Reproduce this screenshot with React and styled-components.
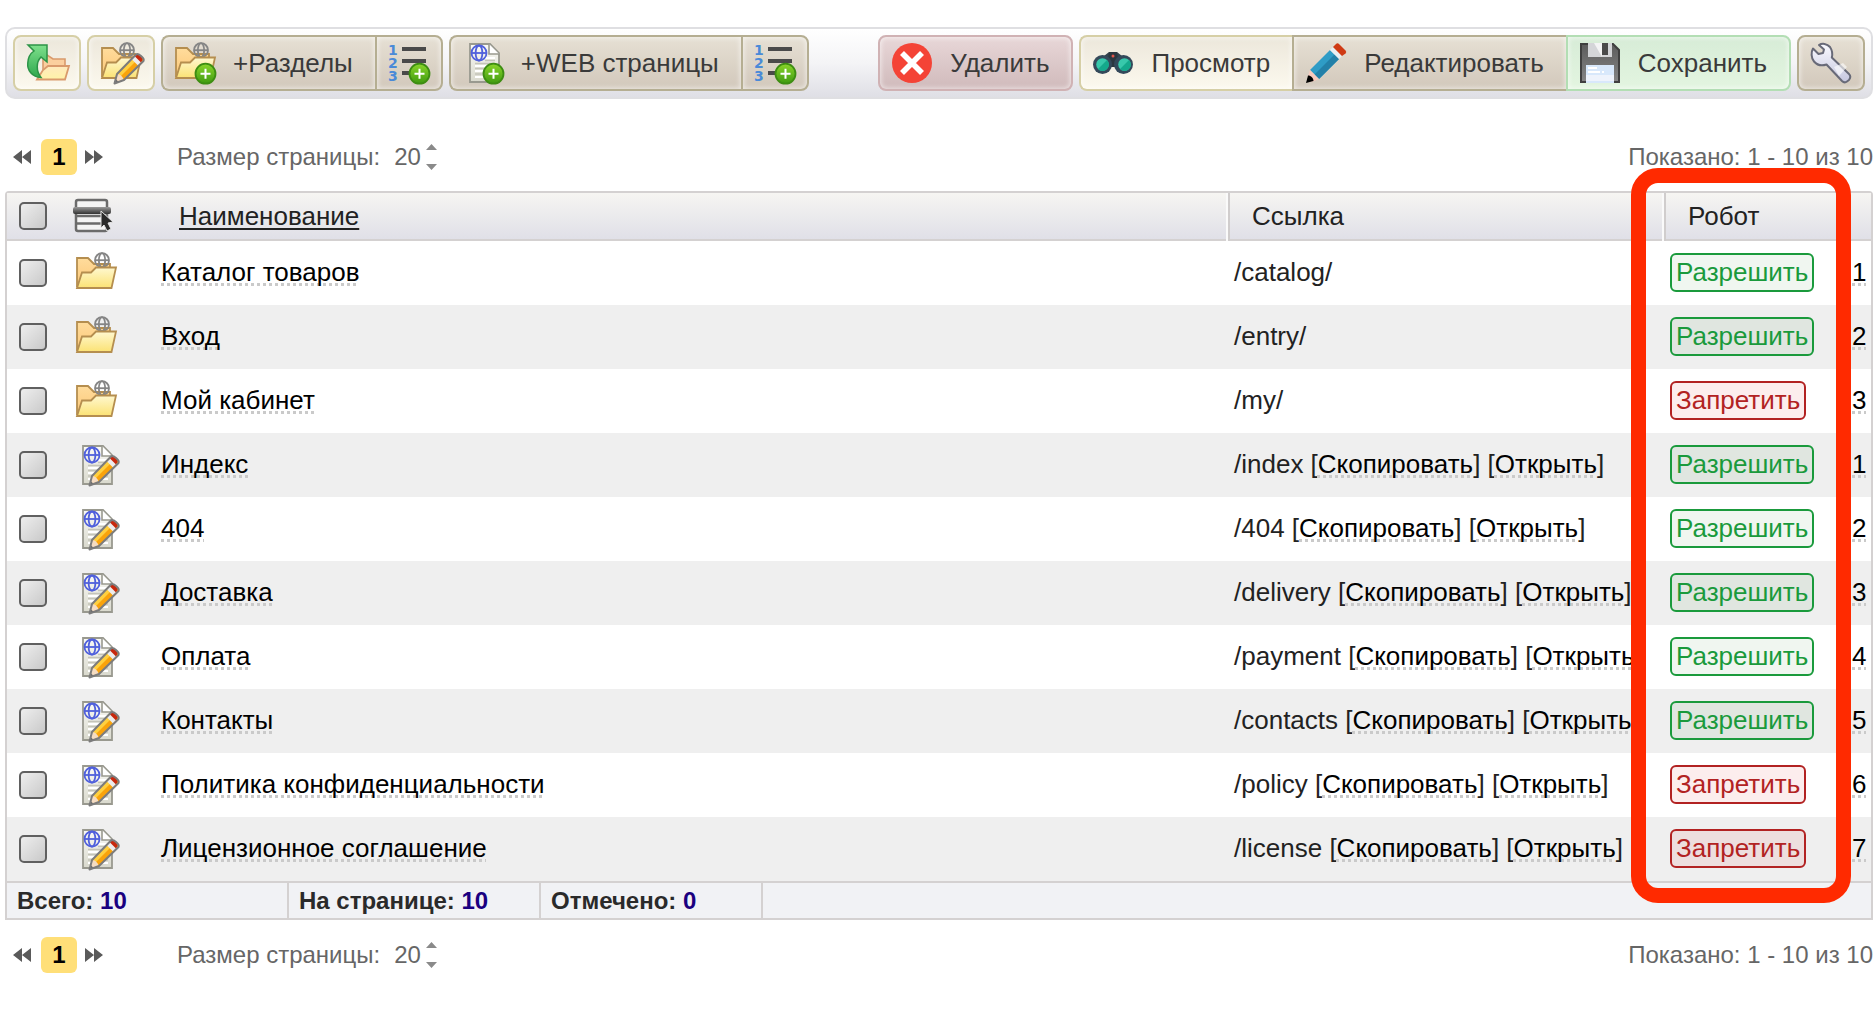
import { useState } from "react";
import styled, { createGlobalStyle, css } from "styled-components";

const GlobalStyle = createGlobalStyle`
    * {
        box-sizing: border-box;
    }

    body {
        margin: 0;
        background: #fff;
        color: #222;
        font: 26px/32px "Liberation Sans", Arial, sans-serif;
    }

    button, input, select {
        margin: 0;
        font: inherit;
        color: inherit;
    }
`;

const tones = {
    light: css`
        border-color: #d6cfa6;
        background: linear-gradient(#ece7db, #fcf9ee);
    `,
    tan: css`
        border-color: #b5ae92;
        background: linear-gradient(#e6e0d4, #d2c8bb);
    `,
    red: css`
        border-color: #d0b2b4;
        background: linear-gradient(#e8d7d8, #d0babb);
    `,
    green: css`
        border-color: #b3deb4;
        background: linear-gradient(#d7ecd7, #e3f5e0);
    `,
};

const Page = styled.main`
    padding: 27px 1px 0 5px;
`;

const Toolbar = styled.div`
    display: flex;
    gap: 6px;
    padding: 6px;
    border: 2px solid #dfdfe2;
    border-radius: 10px;
    background: linear-gradient(#fff, #f4f4f6 50%, #dfdfe5);
`;

const ButtonGroup = styled.div`
    display: flex;
`;

const Spacer = styled.div`
    flex: 1;
`;

const ToolButton = styled.button`
    display: flex;
    align-items: center;
    gap: 18px;
    height: 56px;
    padding: 0 12px;
    padding-right: ${props => (props.$wide ? "22px" : "12px")};
    border: 2px solid;
    border-radius: 8px;
    color: #3a3a3a;
    white-space: nowrap;
    cursor: pointer;
    ${props => tones[props.$tone]}
    box-shadow: inset 0 0 5px 1px rgba(255, 255, 255, 0.6);

    ${ButtonGroup} &:not(:first-child) {
        border-top-left-radius: 0;
        border-bottom-left-radius: 0;
    }

    ${ButtonGroup} &:not(:last-child) {
        border-right: 0;
        border-top-right-radius: 0;
        border-bottom-right-radius: 0;
    }
`;

const Svg = styled.svg`
    display: block;
    flex: none;
    overflow: visible;
`;

const PagerBar = styled.nav`
    display: flex;
    align-items: center;
    height: 36px;
    margin: ${props => (props.$top ? "40px 0 16px" : "17px 0 0")};
    padding-left: 8px;
    color: #666;
    font-size: 24px;
    line-height: 36px;
`;

const ArrowButton = styled.button`
    padding: 0;
    border: 0;
    background: none;
`;

const Current = styled.span`
    width: 36px;
    margin: 0 8px 0 10px;
    border-radius: 6px;
    background: #ffdf78;
    color: #000;
    font-weight: bold;
    text-align: center;
`;

const SizeLabel = styled.label`
    display: flex;
    align-items: center;
    margin-left: 74px;
`;

const SizeSelect = styled.select`
    margin: 0 5px 0 14px;
    padding: 0;
    border: 0;
    background: none;
    appearance: none;
`;

const Shown = styled.span`
    margin-left: auto;
`;

const Frame = styled.section`
    position: relative;
    border: 2px solid #d4d1d1;
    border-radius: 4px 4px 0 0;
`;

const Table = styled.table`
    width: 100%;
    border-collapse: collapse;
    table-layout: fixed;
`;

const HeadRow = styled.tr`
    height: 48px;
    background: linear-gradient(#f6f5f2, #dfdfe7);
    box-shadow: inset 0 -2px #d4d1d1;
`;

const HeadCell = styled.th`
    padding: 0 0 2px ${props => props.$pad || "24px"};
    font-weight: normal;
    text-align: left;
    ${props => props.$divided && "box-shadow: inset 2px 0 #d0cdcd;"}
    ${props => props.$edge && "box-shadow: inset -2px 0 #fafafa;"}
    ${props => props.$divided && props.$edge && "box-shadow: inset 2px 0 #d0cdcd, inset -2px 0 #fafafa;"}
`;

const SortLink = styled.a`
    color: inherit;
    text-decoration: underline;
    text-decoration-thickness: 2px;
    text-underline-offset: 3px;
`;

const Row = styled.tr`
    height: 64px;

    &:nth-child(even) {
        background: #efefef;
    }
`;

const Cell = styled.td`
    padding: 0 0 2px 6px;
    white-space: nowrap;
`;

const MarkCell = styled.td`
    padding: 0 0 0 ${props => props.$pad};
`;

const Check = styled.input`
    display: block;
    width: 28px;
    height: 28px;
    border: 2px solid #606060;
    border-radius: 5px;
    background: linear-gradient(135deg, #eee, #c9c9c9);
    appearance: none;

    &:checked {
        background: #666;
        box-shadow: inset 0 0 0 4px #e4e4e4;
    }
`;

const DottedLink = styled.a`
    color: #000;
    text-decoration: underline dotted #cacaca;
    text-decoration-thickness: 3px;
    text-decoration-skip-ink: none;
    text-underline-offset: 2px;
`;

const RobotButton = styled.button`
    display: block;
    height: 39px;
    padding: 0 4px;
    border: 2px solid ${props => (props.$allow ? "#1a9a3c" : "#b22222")};
    border-radius: 6px;
    background: ${props => (props.$allow ? "rgba(0, 100, 0, 0.06)" : "rgba(220, 20, 20, 0.08)")};
    color: ${props => (props.$allow ? "#1a9a3c" : "#b22222")};
    line-height: 34px;
`;

const Summary = styled.footer`
    display: flex;
    height: 37px;
    border-top: 2px solid #d4d1d1;
    background: #f1f2f5;
    color: #2a2a2a;
    font-size: 24px;
    font-weight: bold;
    line-height: 35px;
`;

const Total = styled.div`
    width: ${props => props.$width};
    padding-left: 10px;
    border-right: 2px solid #d4d1d1;

    b {
        color: #1a0080;
    }
`;

const Marker = styled.div`
    position: absolute;
    top: -25px;
    right: 20px;
    bottom: 15px;
    width: 220px;
    border: 15px solid #ff2a00;
    border-radius: 27px;
    pointer-events: none;
`;

function Icon({ children }) {
    return (
        <Svg width="40" height="40" viewBox="0 0 40 40" fill="none" aria-hidden="true">
            {children}
        </Svg>
    );
}

function Gradients() {
    const list = [
        ["folderBack", "#ffdc9c", "#fcc777"],
        ["folderFront", "#fff8d0", "#fbe274"],
        ["peach", "#ffe9bd", "#fff3a8"],
        ["arrow", "#7ee08c", "#2fa84d"],
        ["sheet", "#fafaf6", "#d9d9cd"],
        ["plus", "#8ad62a", "#3f9a10"],
        ["steel", "#fafaff", "#c5c6de"],
        ["bar", "#999", "#333"],
        ["disk", "#5c5c5c", "#858585"],
    ];
    return (
        <Svg width="0" height="0" style={{ position: "absolute" }} aria-hidden="true">
            <defs>
                {list.map(([id, from, to]) => (
                    <linearGradient key={id} id={id} x1="0" y1="0" x2="0" y2="1">
                        <stop offset="0" stopColor={from} />
                        <stop offset="1" stopColor={to} />
                    </linearGradient>
                ))}
            </defs>
        </Svg>
    );
}

const Globe = ({ x, y, color, r = 7 }) => (
    <g stroke={color} strokeWidth="1.8" transform={`translate(${x} ${y})`}>
        <circle r={r} />
        <ellipse rx={r * 0.45} ry={r} />
        <path d={`M${-r} 0H${r}`} />
    </g>
);

const Folder = () => (
    <>
        <path d="M1 34V5h11l6 6h16v8" fill="url(#folderBack)" stroke="#b58e4f" strokeWidth="1.8" />
        <Globe x={26} y={7.2} color="#858585" />
        <path d="M1 35 6 19.500h9l5-5h20L35.500 35Z" fill="url(#folderFront)" stroke="#b58e4f" strokeWidth="1.8" />
    </>
);

const Sheet = () => (
    <>
        <path d="M7 1h20l9 9v29H7Z" fill="url(#sheet)" stroke="#99998f" strokeWidth="1.8" />
        <path d="M26 1v10h10" fill="#fff" stroke="#99998f" strokeWidth="1.6" />
        <path d="M22 15h10M12 23h20M12 28h20M12 34h20" stroke="#fff" strokeWidth="2" />
        <path d="M22 17.500h10M12 20.500h20M12 25.500h20M12 31h20" stroke="#c4c4b9" strokeWidth="1.4" />
        <Globe x={16} y={10} color="#5060dc" r={7.5} />
    </>
);

const Pencil = () => (
    <>
        <path d="m13.500 40.500 2.500-9.500L35 11.500c2-2 9 4 7.500 6.500L23 37Z" fill="#f9a30c" />
        <path d="m16.500 31 15-15.500 3 3L19 34Z" fill="#ffd040" />
        <path d="m30.500 16 3.500-3.500 6.500 6.500-3.500 3.500Z" fill="#ececec" />
        <path d="m33.500 13 2-1.500c2-1 6.500 3.500 6 5.500L40 19.500Z" fill="#c8280e" />
        <path d="m14 40 2.500-9c2.500 0 5.500 3 6 5.500Z" fill="#f5dcc2" />
        <path d="m13.500 40.500 1.200-4.500 3 3Z" fill="#666" />
        <path d="m13.500 40.500 2.500-9.500L35 11.500c2-2 9 4 7.500 6.500L23 37Z" stroke="#7c7c7c" strokeWidth="2" strokeLinejoin="round" />
    </>
);

const Plus = () => (
    <g transform="translate(30.500 30.700)">
        <circle r="10" fill="url(#plus)" stroke="#3d8d12" strokeWidth="1.8" />
        <path d="M-5 0H5M0-5V5" stroke="#fff" strokeWidth="2" />
    </g>
);

const OrderIcon = () => (
    <Icon>
        <g fill="#4a8ad8" fontFamily="DejaVu Sans" fontSize="14" fontWeight="bold">
            <text x="-1" y="12">1</text>
            <text x="-1" y="25">2</text>
            <text x="-1" y="38">3</text>
        </g>
        <path d="M13 6h24M13 18h24M13 30h8" stroke="#4a4a4a" strokeWidth="4" />
        <Plus />
    </Icon>
);

const UpIcon = () => (
    <Icon>
        <path d="M16 32V14l4-2 6 4h12v9" fill="#fbcf9e" stroke="#d99a6c" strokeWidth="1.6" />
        <path d="M10 36.500 16 27l5-4h21l-4 13.500Z" fill="url(#peach)" stroke="#d99a6c" strokeWidth="1.8" />
        <path d="M1 2h19v17l-6-5c-5 5-5 14 0 20.500C5 34 0 27 .8 20 1 14 4 10 7 8Z" fill="url(#arrow)" stroke="#2c9447" strokeWidth="1.5" />
    </Icon>
);

const DeleteIcon = () => (
    <Icon>
        <circle cx="20" cy="20" r="20" fill="#f44336" />
        <path d="m10 10 20 20M30 10 10 30" stroke="#fff" strokeWidth="5.600" />
    </Icon>
);

const BinocularsIcon = () => (
    <Icon>
        <path d="M2 17c2-3 6-4 9-4l5-4h8l5 4c3 0 7 1 9 4l-8 9-8-2h-4l-8 2Z" fill="#34424d" />
        <path d="M16 9h8l2 15H14Z" fill="#2b3740" />
        <circle cx="9.500" cy="21.500" r="9.500" fill="#34495a" />
        <circle cx="30.500" cy="21.500" r="9.500" fill="#34495a" />
        <circle cx="9.500" cy="21.500" r="6.300" fill="#37c8ab" />
        <circle cx="31.500" cy="21.500" r="6.300" fill="#37c8ab" />
        <path d="M5 26a6.300 6.300 0 0 0 9-9ZM27 26a6.300 6.300 0 0 0 9-9Z" fill="#14a98c" />
        <circle cx="20" cy="13" r="1.500" fill="#e2574c" />
    </Icon>
);

const BluePencilIcon = () => (
    <Icon>
        <path d="m4 27 20-20 9 9-20 20Z" fill="#2f9cc6" />
        <path d="m8.500 31.500 20-20 4.500 4.500-20 20Z" fill="#2380a8" />
        <path d="m24 7 3-3 9 9-3 3Z" fill="#e9eef2" />
        <path d="m27 4 3-3q1.500-1.500 3.500.5l6 6q1.500 1.500 0 3L36 13Z" fill="#cf3a14" />
        <path d="m4 27-2.500 8 4 4L13 36Z" fill="#f9c9bd" />
        <path d="M2 32.500 0 40l7.500-2c0-3-2.500-5.500-5.500-5.500Z" fill="#000" />
    </Icon>
);

const DiskIcon = () => (
    <Icon>
        <path d="M1 1h32l6 6v32H1Z" fill="url(#disk)" stroke="#3f3f3f" strokeWidth="2" />
        <path d="M8 0h24v14H8Z" fill="#d4d5d8" />
        <path d="M14 0h8v14Z" fill="#f3f3f4" />
        <path d="M22 0h6v12h-6Z" fill="#4a4a4a" />
        <path d="M6 22h28v18H6Z" fill="#d8e8fb" />
        <path d="M6 32h28v6H6Z" fill="#eef3fc" />
        <path d="M8 25h9M8 29h12M22 29h2" stroke="#fff" strokeWidth="2" />
    </Icon>
);

const WrenchIcon = () => (
    <Icon>
        <path
            d="M8 2c3-2 8-1.500 11 2 2 3 3 6 1.800 10.500L38 31c2 2 1.500 4 0 6l-2 1.500c-2 1.500-4 .5-5-.5L15.500 21.500C11 23 6 22 3 18.500 0 15 0 9 2 5.500L7.500 11 12 10l1-3.500Z"
            fill="url(#steel)"
            stroke="#686a78"
            strokeWidth="2"
            strokeLinejoin="round"
        />
        <path d="m23 24 9-4 4 4-8 9Z" fill="#fff" opacity=".6" />
    </Icon>
);

const MenuIcon = () => (
    <Icon>
        <rect x="3" y="4" width="31" height="31" rx="2" fill="#f4f4f4" stroke="#6b6b6b" strokeWidth="2.500" />
        <path d="M3 20h31M3 27.500h31" stroke="#6b6b6b" strokeWidth="2.500" />
        <rect y="11" width="38" height="7" rx="2" fill="url(#bar)" />
        <path d="m28 15 12 11-5 1 3 6-4 2-3-6-3 3Z" fill="#2a2a2a" stroke="#e4e4e4" />
    </Icon>
);

function Pager({ top }) {
    const [size, setSize] = useState("20");
    return (
        <PagerBar $top={top} aria-label="Страницы">
            <ArrowButton aria-label="Предыдущая страница">
                <Svg width="18" height="14" viewBox="0 0 18 14">
                    <path d="M9 0v14L0 7ZM18 0v14L9 7Z" fill="#5a5a5a" />
                </Svg>
            </ArrowButton>
            <Current>1</Current>
            <ArrowButton aria-label="Следующая страница">
                <Svg width="18" height="14" viewBox="0 0 18 14">
                    <path d="M0 0v14l9-7ZM9 0v14l9-7Z" fill="#5a5a5a" />
                </Svg>
            </ArrowButton>
            <SizeLabel>
                Размер страницы:
                <SizeSelect value={size} onChange={e => setSize(e.target.value)}>
                    <option>20</option>
                    <option>50</option>
                </SizeSelect>
                <Svg width="11" height="26" viewBox="0 0 11 26">
                    <path d="M0 6 5.500 0 11 6ZM0 20l5.500 6 5.500-6Z" fill="#8a8a8a" />
                </Svg>
            </SizeLabel>
            <Shown>Показано: 1 - 10 из 10</Shown>
        </PagerBar>
    );
}

const items = [
    { name: "Каталог товаров", url: "/catalog/", folder: true, allow: true, order: 1 },
    { name: "Вход", url: "/entry/", folder: true, allow: true, order: 2 },
    { name: "Мой кабинет", url: "/my/", folder: true, allow: false, order: 3 },
    { name: "Индекс", url: "/index", allow: true, order: 1 },
    { name: "404", url: "/404", allow: true, order: 2 },
    { name: "Доставка", url: "/delivery", allow: true, order: 3 },
    { name: "Оплата", url: "/payment", allow: true, order: 4 },
    { name: "Контакты", url: "/contacts", allow: true, order: 5 },
    { name: "Политика конфиденциальности", url: "/policy", allow: false, order: 6 },
    { name: "Лицензионное соглашение", url: "/license", allow: false, order: 7 },
];

function ItemRow({ item }) {
    return (
        <Row>
            <MarkCell $pad="12px"><Check type="checkbox" aria-label={item.name} /></MarkCell>
            <MarkCell $pad="9px">
                <Icon>
                    {item.folder ? <Folder /> : <><Sheet /><Pencil /></>}
                </Icon>
            </MarkCell>
            <Cell><DottedLink href="#">{item.name}</DottedLink></Cell>
            <Cell>
                {item.url}
                {!item.folder && (
                    <> [<DottedLink href="#">Скопировать</DottedLink>] [<DottedLink href="#">Открыть</DottedLink>]</>
                )}
            </Cell>
            <Cell>
                <RobotButton $allow={item.allow}>{item.allow ? "Разрешить" : "Запретить"}</RobotButton>
            </Cell>
            <Cell><DottedLink href="#">{item.order}</DottedLink></Cell>
        </Row>
    );
}

export default function App() {
    return (
        <Page>
            <GlobalStyle />
            <Gradients />
            <Toolbar>
                <ToolButton $tone="light" aria-label="Наверх"><UpIcon /></ToolButton>
                <ToolButton $tone="light" aria-label="Изменить раздел">
                    <Icon><Folder /><Pencil /></Icon>
                </ToolButton>
                <ButtonGroup>
                    <ToolButton $tone="tan" $wide><Icon><Folder /><Plus /></Icon>+Разделы</ToolButton>
                    <ToolButton $tone="tan" aria-label="Порядок разделов"><OrderIcon /></ToolButton>
                </ButtonGroup>
                <ButtonGroup>
                    <ToolButton $tone="tan" $wide><Icon><Sheet /><Plus /></Icon>+WEB страницы</ToolButton>
                    <ToolButton $tone="tan" aria-label="Порядок страниц"><OrderIcon /></ToolButton>
                </ButtonGroup>
                <Spacer />
                <ToolButton $tone="red" $wide><DeleteIcon />Удалить</ToolButton>
                <ButtonGroup>
                    <ToolButton $tone="light" $wide><BinocularsIcon />Просмотр</ToolButton>
                    <ToolButton $tone="tan" $wide><BluePencilIcon />Редактировать</ToolButton>
                    <ToolButton $tone="green" $wide><DiskIcon />Сохранить</ToolButton>
                </ButtonGroup>
                <ToolButton $tone="tan" aria-label="Настройки"><WrenchIcon /></ToolButton>
            </Toolbar>

            <Pager top />

            <Frame>
                <Table>
                    <colgroup>
                        <col width="60" />
                        <col width="88" />
                        <col />
                        <col width="436" />
                        <col width="182" />
                        <col width="25" />
                    </colgroup>
                    <thead>
                        <HeadRow>
                            <HeadCell $pad="12px"><Check type="checkbox" aria-label="Выбрать все" /></HeadCell>
                            <HeadCell $pad="6px"><MenuIcon /></HeadCell>
                            <HeadCell $edge><SortLink href="#">Наименование</SortLink></HeadCell>
                            <HeadCell $divided $edge>Ссылка</HeadCell>
                            <HeadCell $divided>Робот</HeadCell>
                            <HeadCell />
                        </HeadRow>
                    </thead>
                    <tbody>
                        {items.map(item => <ItemRow key={item.url} item={item} />)}
                    </tbody>
                </Table>
                <Summary>
                    <Total $width="282px">Всего: <b>10</b></Total>
                    <Total $width="252px">На странице: <b>10</b></Total>
                    <Total $width="222px">Отмечено: <b>0</b></Total>
                </Summary>
                <Marker />
            </Frame>

            <Pager />
        </Page>
    );
}
